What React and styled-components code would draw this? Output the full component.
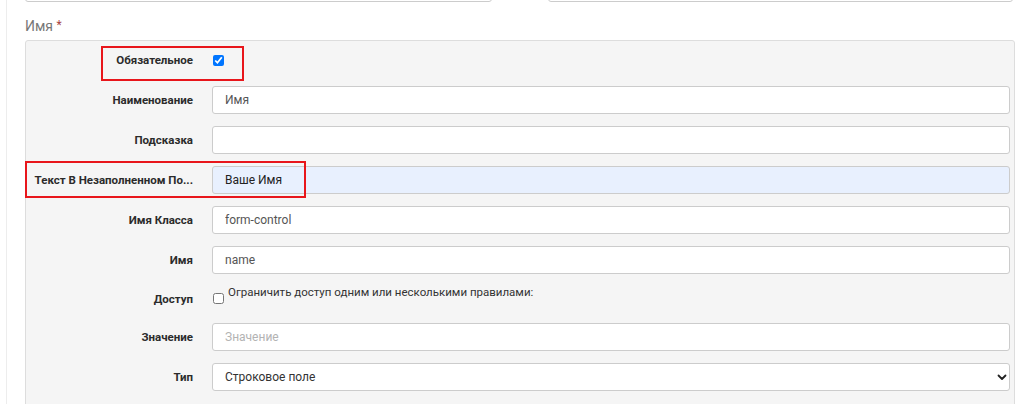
import React from 'react'
import styled, { createGlobalStyle } from 'styled-components'

const GlobalStyle = createGlobalStyle`
  html, body {
    margin: 0;
    background: #fff;
    font-family: Roboto, "Liberation Sans", Arial, sans-serif;
    color: #333;
  }
  * { box-sizing: border-box; }
`

const rows = [
  { label: 'Наименование', value: 'Имя' },
  { label: 'Подсказка', value: '' },
  { label: 'Текст В Незаполненном По...', value: 'Ваше Имя', autofill: true, marked: true },
  { label: 'Имя Класса', value: 'form-control' },
  { label: 'Имя', value: 'name' },
]

function App() {
  return (
    <>
      <GlobalStyle />
      <Page>
        <TopRow>
          <TopInput />
          <TopInput />
        </TopRow>
        <SectionTitle>
          Имя <Star>*</Star>
        </SectionTitle>
        <Panel>
          <Row>
            <Label>Обязательное</Label>
            <CheckCell>
              <Checkbox type="checkbox" defaultChecked />
            </CheckCell>
            <Marker style={{ left: 75, top: 0, width: 143, height: 35 }} />
          </Row>
          {rows.map(r => (
            <Row key={r.label}>
              <Label>{r.label}</Label>
              <Input defaultValue={r.value} $autofill={r.autofill} />
              {r.marked && <Marker style={{ left: -1, top: -5, width: 281, height: 37 }} />}
            </Row>
          ))}
          <Row $short>
            <Label>Доступ</Label>
            <AccessCell>
              <AccessBox type="checkbox" />
              <AccessText>Ограничить доступ одним или несколькими правилами:</AccessText>
            </AccessCell>
          </Row>
          <Row>
            <Label>Значение</Label>
            <Input placeholder="Значение" />
          </Row>
          <Row>
            <Label>Тип</Label>
            <SelectWrap>
              <Select defaultValue="string">
                <option value="string">Строковое поле</option>
              </Select>
              <Chevron viewBox="0 0 10 10">
                <path d="M1.5 3.5 L5 7 L8.5 3.5" fill="none" stroke="#222" strokeWidth="1.8" strokeLinecap="round" strokeLinejoin="round" />
              </Chevron>
            </SelectWrap>
          </Row>
        </Panel>
      </Page>
    </>
  )
}

export default App

const Page = styled.div`
  margin-left: 6px;
  border-left: 1px solid #ededed;
  padding: 0 9px 0 18px;
  min-height: 404px;
  overflow: hidden;
`
const TopRow = styled.div`
  display: flex;
  justify-content: space-between;
  margin-top: -26px;
`
const TopInput = styled.div`
  height: 28px;
  width: 467px;
  border: 1px solid #ccc;
  border-radius: 3px;
  &:last-child { width: 465px; margin-right: 2px; }
`
const SectionTitle = styled.div`
  font-size: 14px;
  color: #777;
  margin-top: 13px;
  line-height: 20px;
`
const Star = styled.span`
  color: #a94442;
  font-size: 12px;
  vertical-align: 2px;
`
const Panel = styled.div`
  margin-top: 4px;
  background: #f5f5f5;
  border: 1px solid #ddd;
  border-radius: 3px;
  padding: 5px 4px 20px 0;
  display: flex;
  flex-direction: column;
  gap: 12px;
`
const Row = styled.div`
  position: relative;
  display: grid;
  grid-template-columns: 186px 1fr;
  align-items: center;
  min-height: ${p => (p.$short ? '25px' : '28px')};
`
const Label = styled.div`
  font-size: 11.5px;
  font-weight: 700;
  color: #2b2b2b;
  text-align: right;
  padding: 0 19px 0 4px;
  white-space: nowrap;
  overflow: hidden;
  text-overflow: ellipsis;
`
const Input = styled.input`
  height: 28px;
  width: 100%;
  border: 1px solid #ccc;
  border-radius: 3px;
  background: ${p => (p.$autofill ? '#e8f0fe' : '#fff')};
  padding: 0 12px;
  font-family: Roboto, "Liberation Sans", Arial, sans-serif;
  font-size: 12px;
  color: ${p => (p.$autofill ? '#222' : '#555')};
  outline: none;
  &::placeholder { color: #b3b3b3; }
`
const CheckCell = styled.div`
  display: flex;
  align-items: center;
`
const Checkbox = styled.input`
  margin: 0 0 0 1px;
  width: 11px;
  height: 11px;
  accent-color: #0075ff;
`
const AccessCell = styled.div`
  display: flex;
  align-items: flex-start;
  align-self: stretch;
`
const AccessBox = styled.input`
  margin: 7px 4px 0 1px;
  width: 11px;
  height: 11px;
`
const AccessText = styled.span`
  font-size: 11.5px;
  color: #333;
  line-height: 14px;
  margin-top: -1px;
`
const SelectWrap = styled.div`
  position: relative;
`
const Select = styled.select`
  appearance: none;
  height: 28px;
  width: 100%;
  border: 1px solid #ccc;
  border-radius: 3px;
  background: #fff;
  padding: 0 12px;
  font-family: Roboto, "Liberation Sans", Arial, sans-serif;
  font-size: 12px;
  color: #333;
  outline: none;
`
const Chevron = styled.svg`
  position: absolute;
  right: 3px;
  top: 9px;
  width: 10px;
  height: 10px;
  pointer-events: none;
`
const Marker = styled.div`
  position: absolute;
  border: 2px solid #e8161b;
  pointer-events: none;
`
